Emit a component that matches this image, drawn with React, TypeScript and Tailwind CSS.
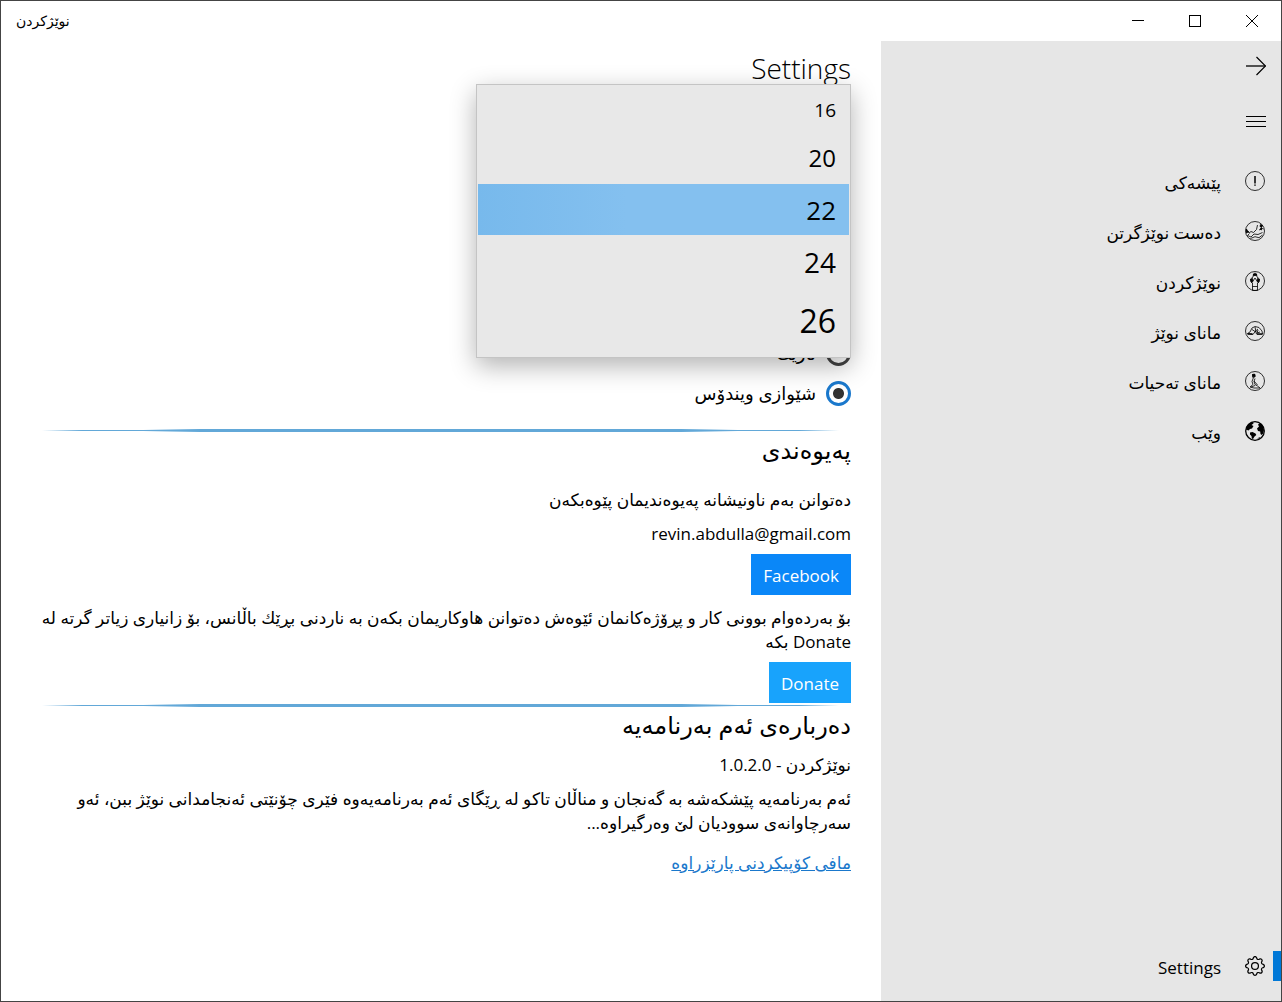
import { useState } from "react";
import type { ReactNode } from "react";
import { BsGear } from "react-icons/bs";

const fontSizes = [
  { value: "16", className: "h-[44px] text-[19px]" },
  { value: "20", className: "h-[51px] text-[24px]" },
  { value: "22", className: "h-[51px] text-[26px]" },
  { value: "24", className: "h-[56px] text-[28px]" },
  { value: "26", className: "h-[62px] text-[32px]" },
];

function RoundIcon({ children }: { children: ReactNode }) {
  return (
    <svg
      viewBox="0 0 20 20"
      className="size-5"
      fill="none"
      stroke="black"
      strokeWidth="0.8"
      aria-hidden="true"
    >
      <circle cx="10" cy="10" r="9.5" />
      {children}
    </svg>
  );
}

const navItems = [
  {
    label: "پێشەکی",
    icon: (
      <RoundIcon>
        <path d="M10 5v7.500M10 13.500v1.300" strokeWidth="1.500" />
      </RoundIcon>
    ),
  },
  {
    label: "دەست نوێژگرتن",
    icon: (
      <RoundIcon>
        <path d="M1 8.500l3 3.500 2-1.500 2.500 1 3-3 1-4.500M4.500 12.500l-2 2 3.500 1.500 3-3 4 .5 4.500-2M5.500 17.500l4.500-1.800 4 1 3.500-2.700M14 9l2-1M16 7l2.500 1M2 10.500h2" />
        <path d="M15.500 3.500l2 1-1 2-1.500-1zM1.500 8l1.500 3-1.500 1zM15 8l1.500-1v2z" fill="black" />
      </RoundIcon>
    ),
  },
  {
    label: "نوێژکردن",
    icon: (
      <RoundIcon>
        <path d="M8 6l.5-3 1.500-1 1.500 1 .5 3 2.500 2-.5 3-1.500 1v7.500h-5v-7.500l-1.500-1-.5-3zM7.500 15.500h5M8 10l2-3 2 3" />
        <path d="M8.500 3h3v1.500h-3zM5.500 8.500l2-1 .5 3-1.500 1zM14.500 8.500l-2-1-.5 3 1.500 1z" fill="black" />
      </RoundIcon>
    ),
  },
  {
    label: "مانای نوێژ",
    icon: (
      <RoundIcon>
        <path d="M2.500 12.500l2.500-1.500 2-4 3-1.500 4 1 3 3.500.5 3h-6l-1-3-2.500 3.500zM7 8.500l3 2 3-2.500M10 6l1 5M13 9l-1 3 3-1" />
        <path d="M2.500 13h5M12 13.200h5.500" strokeWidth="1.300" />
      </RoundIcon>
    ),
  },
  {
    label: "مانای تەحیات",
    icon: (
      <RoundIcon>
        <path d="M7.500 3.500l2-.5 .5 2.500-1.500 1.500-1-1zM8.500 6.500l-1.500 4 1 3-3 2.500 4 1h6l-2.500-2-2.500-1.500-1-3 1-3M9 10l3.500 4M6 16l4-1.500" />
        <path d="M7.500 3.500h2.500v2h-2z" fill="black" />
      </RoundIcon>
    ),
  },
  {
    label: "وێب",
    icon: (
      <svg viewBox="0 0 20 20" className="size-5" aria-hidden="true">
        <circle cx="10" cy="10" r="9.300" fill="none" stroke="black" strokeWidth="1.300" />
        <path d="M.8 8.500L2 5l3-3 3-1 .5 1.500L6.500 4l2 1L7 7.500 5 8 3.500 9.500zM5 11.500l2.500-.5 3 1.500.8 1.500-1.800 1.500L8 18l-1.200-.5-.3-2.500-1.500-1.500z" />
        <path d="M13 3.500l2.500-1.500 2.500 3 1 4-.8 3.500-1.700 1.500-1-1-.3-2.500-2.200-.5-1-2.500L14 5.500zM12 17.500l3-1.500-.5 1.500z" />
      </svg>
    ),
  },
];

function Divider() {
  return (
    <hr className="mr-3 ml-[11px] h-[3px] border-0 bg-[radial-gradient(closest-side,#62a8d8_90%,transparent)]" />
  );
}

function TitleBar() {
  return (
    <header className="flex h-10 items-center justify-between pr-px pl-[15px]">
      <h1 className="text-sm" dir="rtl">
        نوێژکردن
      </h1>
      <div className="flex">
        <button aria-label="Minimize" className="flex h-10 w-[57px] items-center justify-center">
          <svg viewBox="0 0 12 12" className="size-3" stroke="black" fill="none">
            <path d="M0 5.500h12" />
          </svg>
        </button>
        <button aria-label="Maximize" className="flex h-10 w-[57px] items-center justify-center">
          <svg viewBox="0 0 12 12" className="size-3" stroke="black" fill="none">
            <rect x=".5" y=".5" width="11" height="11" />
          </svg>
        </button>
        <button aria-label="Close" className="flex h-10 w-[57px] items-center justify-center">
          <svg viewBox="0 0 12 12" className="size-3" stroke="black" fill="none">
            <path d="M0 0l12 12M12 0L0 12" />
          </svg>
        </button>
      </div>
    </header>
  );
}

function Sidebar() {
  return (
    <nav className="flex w-[400px] shrink-0 flex-col bg-[#e6e6e6]">
      <button aria-label="Back" className="flex h-[50px] items-center px-[15px]">
        <svg viewBox="0 0 20 20" className="size-5" fill="none" stroke="black">
          <path d="M0 10h19.500" strokeWidth="1.300" />
          <path d="M10.500 1l9 9-9 9" strokeWidth="1.200" />
        </svg>
      </button>
      <button aria-label="Menu" className="mt-[5px] flex h-[50px] items-center px-[15px]">
        <svg viewBox="0 0 20 20" className="size-5" fill="none" stroke="black">
          <path d="M0 5.500h20M0 10.500h20M0 15.500h20" />
        </svg>
      </button>
      <ul className="mt-[10px]">
        {navItems.map((item) => (
          <li key={item.label}>
            <a href="#" className="flex h-[50px] items-center gap-6 px-4">
              {item.icon}
              <span className="pt-1">{item.label}</span>
            </a>
          </li>
        ))}
      </ul>
      <a href="#" className="mt-auto mb-[10px] flex h-[50px] items-center">
        <span className="h-[30px] w-2 bg-[#0078d7]" />
        <BsGear className="mr-2 size-5" />
        <span className="mr-6 pt-1">Settings</span>
      </a>
    </nav>
  );
}

function ThemeRadio({
  label,
  checked,
  onChange,
}: {
  label: string;
  checked: boolean;
  onChange: () => void;
}) {
  return (
    <label className="flex h-10 items-center gap-[10px] text-lg">
      <input
        type="radio"
        name="theme"
        checked={checked}
        onChange={onChange}
        className="size-[25px] appearance-none rounded-full border-[3px] border-[#444] checked:border-[#1a78cc] checked:bg-[radial-gradient(circle,#333_5px,transparent_6px)]"
      />
      {label}
    </label>
  );
}

export default function App() {
  const [theme, setTheme] = useState("windows");
  const [size, setSize] = useState("22");

  return (
    <div className="flex min-h-screen flex-col border border-[#444] bg-white font-['Open_Sans','DejaVu_Sans',sans-serif] text-black">
      <TitleBar />
      <div className="flex flex-1 text-[17px] leading-6" dir="rtl">
        <Sidebar />
        <main className="min-w-0 flex-1 px-[30px]">
          <h2 className="h-[43px] text-[28px] leading-[54px] font-light">Settings</h2>

          <section className="relative pt-[249px]">
            <select
              size={5}
              aria-label="Font size"
              value={size}
              onChange={(e) => setSize(e.target.value)}
              className="absolute top-0 right-0 h-[274px] w-[375px] overflow-hidden border border-[#c4c4c4] bg-[#e8e8e8] px-px py-1 shadow-[0_8px_24px_rgba(0,0,0,0.3)] outline-none"
            >
              {fontSizes.map((s) => (
                <option
                  key={s.value}
                  value={s.value}
                  className={`${s.className} px-[13px] pt-2 pb-0 text-black checked:bg-[linear-gradient(to_right,#77b9ec,#84c0ef_40%)]`}
                >
                  {s.value}
                </option>
              ))}
            </select>
            <ThemeRadio
              label="تاریك"
              checked={theme === "dark"}
              onChange={() => setTheme("dark")}
            />
            <ThemeRadio
              label="شێوازی ویندۆس"
              checked={theme === "windows"}
              onChange={() => setTheme("windows")}
            />
          </section>

          <div className="pt-4">
            <Divider />
          </div>
          <section>
            <h3 className="text-2xl leading-9">پەیوەندی</h3>
            <p className="mt-5">دەتوانن بەم ناونیشانە پەیوەندیمان پێوەبکەن</p>
            <p className="mt-[10px]">revin.abdulla@gmail.com</p>
            <button className="mt-2 block h-[41px] bg-[#0a87f8] px-3 pt-0.5 text-white">
              Facebook
            </button>
            <p className="mt-[11px]">
              بۆ بەردەوام بوونی کار و پڕۆژەکانمان ئێوەش دەتوانن هاوکاریمان بکەن بە ناردنی بڕێك باڵانس، بۆ زانیاری زیاتر گرتە لە
              Donate بکە
            </p>
            <button className="mt-2 block h-[41px] bg-[#18a3fc] px-3 pt-0.5 text-white">
              Donate
            </button>
          </section>

          <div className="pt-px">
            <Divider />
          </div>
          <section>
            <h3 className="text-2xl leading-9">دەربارەی ئەم بەرنامەیە</h3>
            <p className="mt-[10px]">نوێژکردن - 1.0.2.0</p>
            <p className="mt-[10px]">
              ئەم بەرنامەیە پێشکەشە بە گەنجان و مناڵان تاکو لە ڕێگای ئەم بەرنامەیەوە فێری چۆنێتی ئەنجامدانی نوێژ ببن، ئەو سەرچاوانەی سوودیان لێ وەرگیراوە...
            </p>
            <a href="#" className="mt-4 inline-block text-[#1a78cc] underline">
              مافی کۆپیکردنی پارێزراوە
            </a>
          </section>
        </main>
      </div>
    </div>
  );
}
